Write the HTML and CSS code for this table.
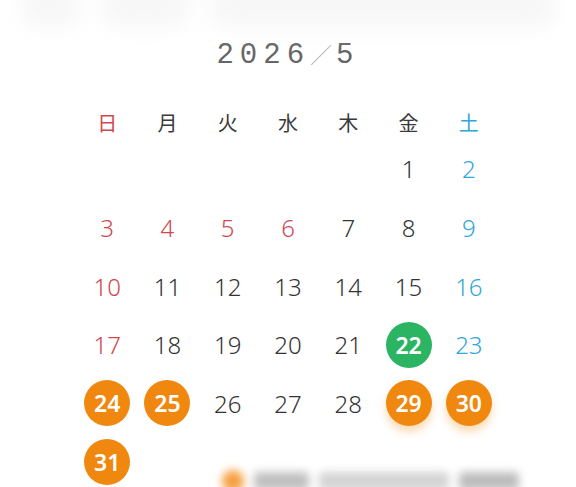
FILE: index.html
```html
<!DOCTYPE html>
<html lang="ja">
<head>
<meta charset="utf-8">
<link rel="stylesheet" href="styles.css">
</head>
<body>
<div class="page">
  <div class="topblur">
    <span class="tb tb1"></span><span class="tb tb2"></span><span class="tb tb3"></span>
  </div>
  <h1 class="title">2026<span class="slash">／</span>5</h1>
  <div class="cal">
    <div class="wd sun">日</div><div class="wd">月</div><div class="wd">火</div><div class="wd">水</div><div class="wd">木</div><div class="wd">金</div><div class="wd sat">土</div>
    <div class="d"></div><div class="d"></div><div class="d"></div><div class="d"></div><div class="d"></div><div class="d">1</div><div class="d sat">2</div>
    <div class="d hol">3</div><div class="d hol">4</div><div class="d hol">5</div><div class="d hol">6</div><div class="d">7</div><div class="d">8</div><div class="d sat">9</div>
    <div class="d hol">10</div><div class="d">11</div><div class="d">12</div><div class="d">13</div><div class="d">14</div><div class="d">15</div><div class="d sat">16</div>
    <div class="d hol">17</div><div class="d">18</div><div class="d">19</div><div class="d">20</div><div class="d">21</div><div class="d"><span class="dot green">22</span></div><div class="d sat">23</div>
    <div class="d"><span class="dot orange">24</span></div><div class="d"><span class="dot orange">25</span></div><div class="d">26</div><div class="d">27</div><div class="d">28</div><div class="d"><span class="dot orange glow">29</span></div><div class="d"><span class="dot orange glow">30</span></div>
    <div class="d"><span class="dot orange">31</span></div>
  </div>
  <div class="legend">
    <span class="lg-dot"></span><span class="lg-bar lg-a"></span><span class="lg-bar lg-b"></span><span class="lg-bar lg-c"></span>
  </div>
</div>
</body>
</html>
```
FILE: styles.css
```css
html, body {
  margin: 0;
  padding: 0;
  background: #fff;
  overflow: hidden;
}
.page {
  position: relative;
  width: 576px;
  height: 487px;
  font-family: "Noto Sans CJK JP", "Noto Sans", sans-serif;
  color: #333;
}
.topblur {
  position: absolute;
  left: 0;
  top: -16px;
  width: 576px;
  height: 50px;
  filter: blur(10px);
  display: flex;
  gap: 20px;
  padding: 0 20px;
  box-sizing: border-box;
}
.tb {
  display: block;
  height: 44px;
  background: #f7f7f7;
  border-radius: 20px;
}
.tb1 { width: 60px; }
.tb2 { width: 90px; }
.tb3 { flex: 1; }
.title {
  margin: 0;
  padding-top: 33px;
  height: 42px;
  text-align: center;
  font-family: "Liberation Mono", monospace;
  font-weight: normal;
  font-size: 29px;
  line-height: 40px;
  letter-spacing: 6px;
  color: #666;
}
.slash {
  color: #aaa;
  font-family: "Noto Sans CJK JP", sans-serif;
  font-weight: 300;
  font-size: 22px;
  letter-spacing: 4px;
}
.cal {
  width: 422px;
  margin: 24px auto 0;
  display: grid;
  grid-template-columns: repeat(7, 1fr);
  grid-auto-rows: 46px;
  row-gap: 12.7px;
  grid-template-rows: 34px;
}
.wd {
  display: flex;
  align-items: center;
  justify-content: center;
  font-size: 20px;
  font-weight: 400;
  color: #3a3a3a;
  margin-bottom: -12px;
}
.d {
  display: flex;
  align-items: center;
  justify-content: center;
  font-family: "Noto Sans", sans-serif;
  font-weight: 300;
  font-size: 24px;
  color: #333;
}
.sun, .hol { color: #d2464f; }
.sat { color: #2ea6d8; }
.dot {
  width: 46px;
  height: 46px;
  border-radius: 50%;
  display: flex;
  align-items: center;
  justify-content: center;
  color: #fff;
  font-family: "Noto Sans", sans-serif;
  font-weight: 600;
  font-size: 23px;
}
.green { background: #2bb563; }
.orange { background: #f0870e; }
.glow { box-shadow: 0 6px 8px rgba(240, 135, 14, 0.3); }
.legend {
  position: absolute;
  left: 222px;
  top: 470px;
  display: flex;
  align-items: center;
  gap: 10px;
  filter: blur(4px);
}
.lg-dot {
  width: 22px;
  height: 22px;
  border-radius: 50%;
  background: #f5a040;
}
.lg-bar {
  height: 18px;
  background: #c0c0c0;
  border-radius: 4px;
}
.lg-a { width: 55px; }
.lg-b { width: 130px; background: #d4d4d4; }
.lg-c { width: 60px; background: #bdbdbd; }
```
